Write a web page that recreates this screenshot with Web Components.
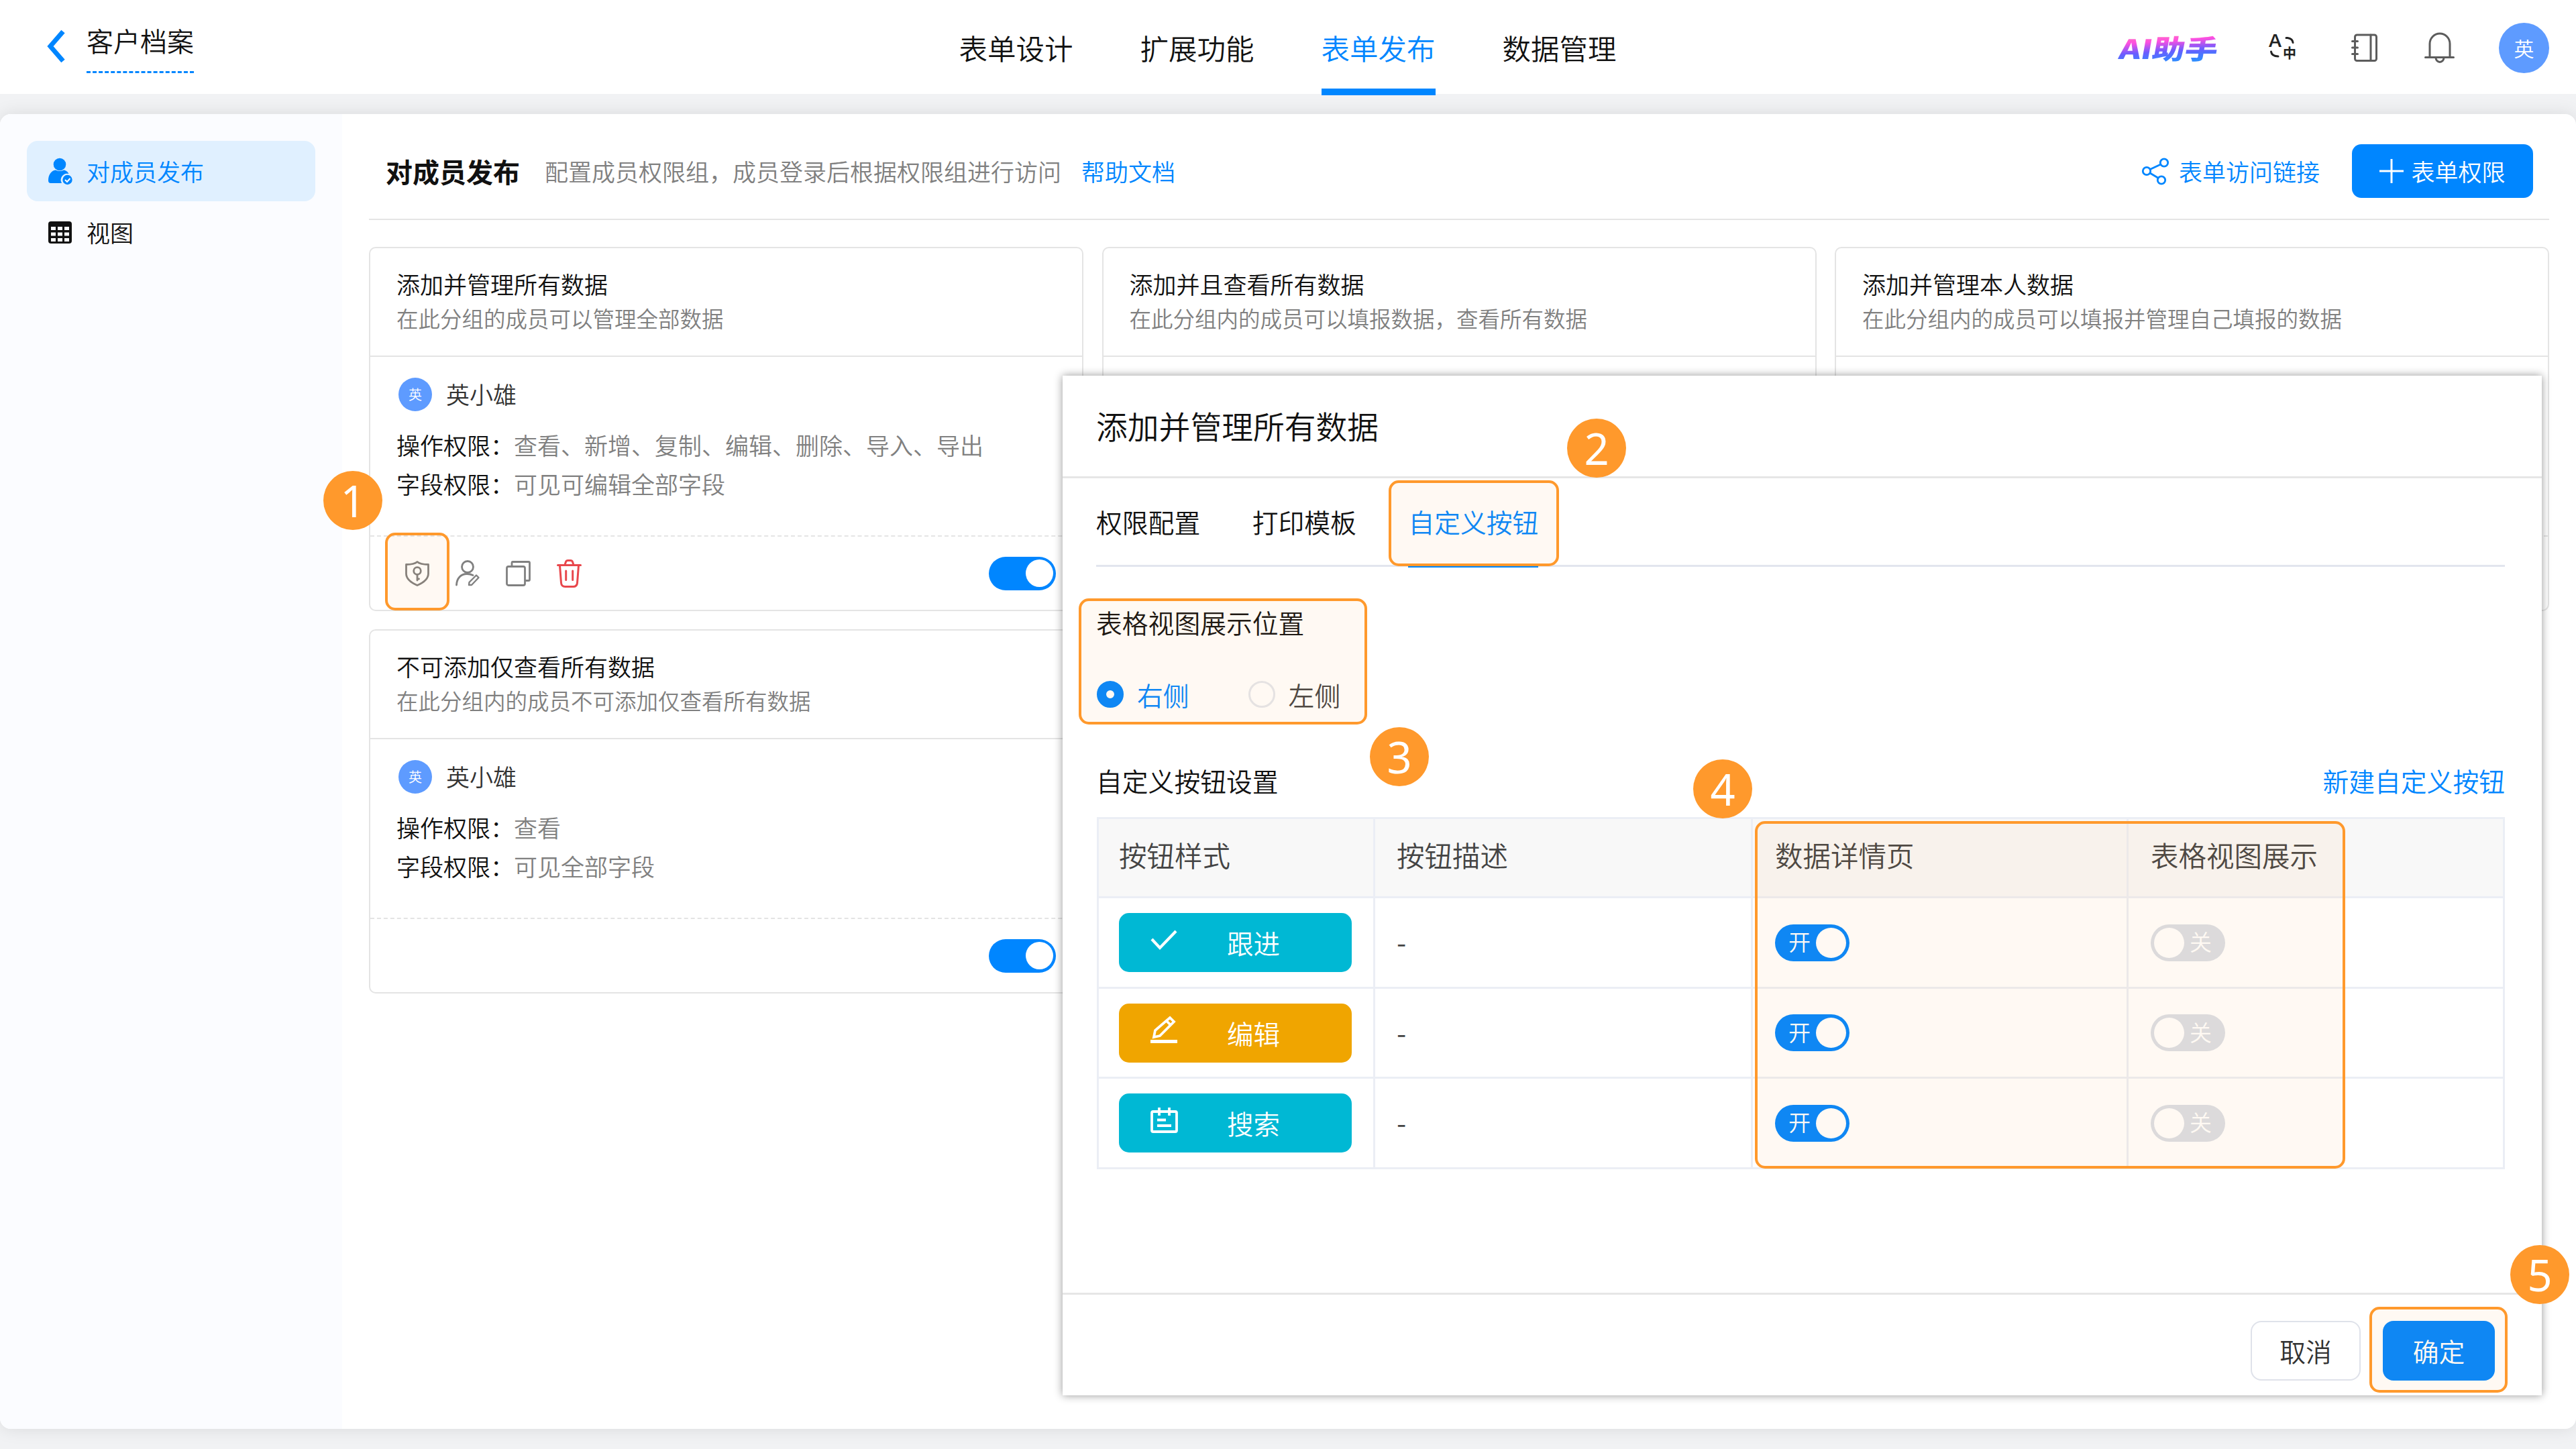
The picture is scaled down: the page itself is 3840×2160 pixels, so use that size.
<!DOCTYPE html>
<html lang="zh-CN">
<head>
<meta charset="utf-8">
<title>客户档案</title>
<style>
    html, body {
        margin: 0;
        width: 3840px;
        height: 2160px;
        overflow: hidden;
    }
    body {
        position: relative;
        background: #f1f2f4;
        color: #111;
        font-family: "Noto Sans CJK SC", "Noto Sans", sans-serif;
        font-size: 35px;
        font-weight: 350;
        line-height: 1.5;
        --primary: #0086ff;
        --line: #e4e4e4;
        --muted: #808080;
        --mark: #ff992c;
    }
</style>
</head>
<body>
<form-header></form-header>
<publish-page></publish-page>
<config-dialog></config-dialog>

<mark-box style="left:574px;top:794px;width:96px;height:116px"></mark-box>
<mark-box style="left:2070px;top:716px;width:254px;height:128px"></mark-box>
<mark-box style="left:1608px;top:892px;width:430px;height:188px"></mark-box>
<mark-box style="left:2616px;top:1224px;width:880px;height:518px"></mark-box>
<mark-box style="left:3532px;top:1948px;width:206px;height:128px"></mark-box>
<mark-badge style="left:482px;top:702px">1</mark-badge>
<mark-badge style="left:2336px;top:624px">2</mark-badge>
<mark-badge style="left:2042px;top:1084px">3</mark-badge>
<mark-badge style="left:2524px;top:1132px">4</mark-badge>
<mark-badge style="left:3742px;top:1856px">5</mark-badge>

<script>
const ICONS = {
    back: [30, 52, '<path d="M27 4 8 26 27 48" fill="none" stroke="currentColor" stroke-width="7"/>'],
    translate: [41, 40, `
        <g fill="currentColor" font-family="Noto Sans CJK SC, sans-serif" font-weight="700">
            <text x="0" y="19" font-size="26" textLength="19" lengthAdjust="spacingAndGlyphs" font-weight="500">A</text>
            <text x="21" y="36" font-size="20">中</text>
        </g>
        <g fill="none" stroke="currentColor" stroke-width="3" stroke-linecap="round">
            <path d="M26 5.500h2q7.500 1 8 7"/>
            <path d="M3.500 26q1 7 10.500 7"/>
        </g>`],
    book: [40, 43, `
        <g fill="none" stroke="currentColor" stroke-width="3" stroke-linecap="round">
            <rect x="5.500" y="2" width="32" height="38.500" rx="3"/>
            <path d="M29 2v38M1.500 11.500h8M1.500 21h8M1.500 30.500h8"/>
        </g>`],
    bell: [45, 46, `
        <g fill="none" stroke="currentColor" stroke-width="3" stroke-linecap="round">
            <path d="M8 37V17.500a15 15.500 0 0 1 30 0V37M1.500 37.500h42"/>
            <path d="M17 38a6 6.500 0 0 0 12 0"/>
        </g>`],
    member: [37, 41, `
        <g fill="currentColor">
            <circle cx="17" cy="10" r="9.300"/>
            <path d="M0 34c0-9 5-15 11-15.500q6 3 12 0c4 .5 6 3 7.500 5.500A9.500 9.500 0 0 0 20 38H3.500Q0 38 0 34z"/>
            <circle cx="28.500" cy="33" r="7.200"/>
        </g>
        <path d="m25 33 3 3 4.500-5" fill="none" stroke="#fff" stroke-width="2"/>`],
    grid: [35, 33, `
        <rect width="35" height="33" rx="4" fill="currentColor"/>
        <path d="M4 8h7v5H4zm10 0h7v5h-7zm10 0h7v5h-7zM4 16.500h7v5H4zm10 0h7v5h-7zm10 0h7v5h-7zM4 25h7v5H4zm10 0h7v5h-7zm10 0h7v5h-7z" fill="#fbfcff"/>`],
    share: [40, 41, `
        <g fill="none" stroke="currentColor" stroke-width="2.800">
            <circle cx="33" cy="7.500" r="5.700"/><circle cx="7" cy="20" r="5.700"/><circle cx="29" cy="33.500" r="5.700"/>
            <path d="M12 17.500 28 10M12 23l12.500 7.500"/>
        </g>`],
    plus: [36, 36, '<path d="M18 0v36M0 18h36" stroke="currentColor" stroke-width="3"/>'],
    shield: [36, 38, `
        <g fill="none" stroke="currentColor" stroke-width="2.800" stroke-linecap="round" stroke-linejoin="round">
            <path d="M18 1.500C14 5 8 5.500 1.500 5.500V19c0 8 6 13 16.500 17.500C28.500 32 34.500 27 34.500 19V5.500C28 5.500 22 5 18 1.500z"/>
            <circle cx="18" cy="15" r="5.300"/><path d="M18 20.500V29M18 27l2.500 0"/>
        </g>`],
    editor: [36, 39, `
        <g fill="none" stroke="currentColor" stroke-width="2.800" stroke-linecap="round">
            <circle cx="18" cy="10" r="8.500"/>
            <path d="M1.500 37C2 27 8 20.500 17 20.500q5 0 9 2"/>
            <path d="M20 37l.5-4L31 22.500l3.500 3.500L24 37z" stroke-width="2.400" stroke-linejoin="round"/>
        </g>`],
    copy: [37, 38, `
        <g fill="none" stroke="currentColor" stroke-width="2.800" stroke-linejoin="round">
            <rect x="1.500" y="8.500" width="27" height="28" rx="2.500"/>
            <path d="M9 8V3q0-1.500 1.500-1.500H34q1.500 0 1.500 1.500v25q0 1.500-1.500 1.500h-5"/>
        </g>`],
    trash: [37, 42, `
        <g fill="none" stroke="#e8474c" stroke-width="3" stroke-linecap="round">
            <path d="M1.500 8.500h34M12 8l1.500-4.500q.7-2 3-2h4q2.300 0 3 2L25 8"/>
            <path d="M4.500 9l2 26q.5 5.500 6 5.500h12q5.500 0 6-5.500l2-26M13.700 17v13.500M23.700 17v13.500"/>
        </g>`],
    check: [40, 30, '<path d="M2 14l12 13L38 2" fill="none" stroke="currentColor" stroke-width="4.200"/>'],
    pencil: [40, 42, `
        <g fill="none" stroke="currentColor" stroke-width="3.800">
            <path d="M5 32l2-10L29 3l6 6-21 21zM24 8l6 6"/><path d="M0 38.500h40" stroke-width="5"/>
        </g>`],
    note: [41, 38, `
        <g fill="none" stroke="currentColor" stroke-width="3.800">
            <rect x="2" y="6" width="37" height="30" rx="2"/>
            <path d="M13 0v12M28 0v12M10 18.500h13M10 27h21"/>
        </g>`]
};

class AppIcon extends HTMLElement {
    connectedCallback() {
        const [w, h, body] = ICONS[this.getAttribute('name')];
        this.attachShadow({ mode: 'open' }).innerHTML = `
            <style>
                :host { display: block; flex: none; width: ${w}px; height: ${h}px; }
                svg { display: block; overflow: visible; }
            </style>
            <svg width="${w}" height="${h}" viewBox="0 0 ${w} ${h}">${body}</svg>`;
    }
}
customElements.define('app-icon', AppIcon);

class UserAvatar extends HTMLElement {
    connectedCallback() {
        this.attachShadow({ mode: 'open' }).innerHTML = `
            <style>
                :host {
                    display: flex;
                    flex: none;
                    align-items: center;
                    justify-content: center;
                    width: 50px;
                    height: 50px;
                    border-radius: 50%;
                    background: #5e9bff;
                    color: #fff;
                    font-size: 20px;
                    line-height: 1;
                }
                :host([large]) { width: 75px; height: 75px; font-size: 30px; }
            </style>
            <slot></slot>`;
    }
}
customElements.define('user-avatar', UserAvatar);

class ToggleSwitch extends HTMLElement {
    connectedCallback() {
        this.attachShadow({ mode: 'open' }).innerHTML = `
            <style>
                :host {
                    box-sizing: border-box;
                    display: flex;
                    flex: none;
                    align-items: center;
                    justify-content: flex-end;
                    width: 100px;
                    height: 50px;
                    padding: 0 4px;
                    border-radius: 28px;
                    background: var(--primary);
                    color: #fff;
                    font-size: 33px;
                    line-height: 50px;
                }
                i { width: 41px; height: 41px; border-radius: 50%; background: #fff; }
                :host([text]) { width: 111px; height: 55px; padding: 0 5px; gap: 8px; }
                :host([text]) i { width: 45px; height: 45px; }
                :host([off]) { flex-direction: row-reverse; background: #dadfe6; }
                span { padding-bottom: 4px; }
            </style>
            ${this.hasAttribute('text') ? `<span>${this.getAttribute('text')}</span>` : ''}<i></i>`;
    }
}
customElements.define('toggle-switch', ToggleSwitch);

class FormHeader extends HTMLElement {
    connectedCallback() {
        this.attachShadow({ mode: 'open' }).innerHTML = `
            <style>
                :host {
                    box-sizing: border-box;
                    display: grid;
                    grid-template-columns: 1fr auto 1fr;
                    height: 140px;
                    padding: 0 40px 0 67px;
                    background: #fff;
                }
                .left { display: flex; align-items: flex-start; gap: 32px; padding-top: 43px; }
                .left app-icon { color: var(--primary); }
                .name {
                    width: 160px;
                    height: 64px;
                    margin-top: -1px;
                    font-size: 40px;
                    line-height: 36px;
                    border-bottom: 3px dashed var(--primary);
                }
                nav { display: flex; gap: 100px; margin-left: -28px; }
                nav a {
                    width: 170px;
                    height: 132px;
                    font-size: 42.500px;
                    line-height: 142px;
                    white-space: nowrap;
                }
                nav a.active { color: var(--primary); border-bottom: 10px solid var(--primary); }
                .right { display: flex; align-items: center; justify-content: flex-end; color: #5c5c5c; }
                .ai {
                    width: 146px;
                    margin-right: 76px;
                }
                .ai span {
                    display: inline-block;
                    font-size: 40px;
                    font-weight: 900;
                    line-height: 56px;
                    white-space: nowrap;
                    transform-origin: 0 50%;
                    transform: skewX(-10deg) scaleX(1.220);
                    background: linear-gradient(175deg, #ff6cc8 22%, #ff4fe0 34%, #6a5cff 58%, #2f8cff 82%);
                    -webkit-background-clip: text;
                    color: transparent;
                }
            </style>
            <div class="left"><app-icon name="back"></app-icon><div class="name">客户档案</div></div>
            <nav><a>表单设计</a><a>扩展功能</a><a class="active">表单发布</a><a>数据管理</a></nav>
            <div class="right">
                <div class="ai"><span>AI助手</span></div>
                <app-icon name="translate" style="color:#222;margin-right:82px"></app-icon>
                <app-icon name="book" style="margin-right:69px"></app-icon>
                <app-icon name="bell" style="margin-right:66px"></app-icon>
                <user-avatar large>英</user-avatar>
            </div>`;
    }
}
customElements.define('form-header', FormHeader);

class NavItem extends HTMLElement {
    connectedCallback() {
        this.attachShadow({ mode: 'open' }).innerHTML = `
            <style>
                :host {
                    display: flex;
                    align-items: center;
                    gap: 22px;
                    height: 90px;
                    padding-left: 32px;
                    border-radius: 16px;
                }
                :host([active]) { gap: 20px; background: #e0f0ff; color: var(--primary); }
            </style>
            <app-icon name="${this.getAttribute('icon')}"></app-icon><slot></slot>`;
    }
}
customElements.define('nav-item', NavItem);

class PermCard extends HTMLElement {
    connectedCallback() {
        const attr = (name) => this.getAttribute(name) || '';
        this.attachShadow({ mode: 'open' }).innerHTML = `
            <style>
                :host {
                    box-sizing: border-box;
                    display: flex;
                    flex-direction: column;
                    height: 543px;
                    border: 2px solid var(--line);
                    border-radius: 10px;
                    background: #fff;
                }
                .head {
                    box-sizing: border-box;
                    height: 162px;
                    padding: 27px 39px 0;
                    border-bottom: 2px solid var(--line);
                    line-height: 51px;
                }
                .head p { margin: 0; color: var(--muted); font-size: 32.500px; }
                .body { flex: 1; padding: 31px 39px 0; line-height: 58px; }
                .user { display: flex; align-items: center; gap: 21px; height: 50px; padding-left: 3px; margin-bottom: 21px; line-height: 1; }
                .user span { padding-bottom: 3px; color: #333; }
                .body b { font-weight: inherit; }
                .body div + div span { color: var(--muted); }
                .foot {
                    display: flex;
                    align-items: center;
                    height: 109px;
                    padding: 0 39px 0 52px;
                    gap: 39px;
                    color: #808080;
                    border-top: 2px dashed var(--line);
                }
                toggle-switch { margin-left: auto; }
            </style>
            <div class="head">${attr('name')}<p>${attr('note')}</p></div>
            <div class="body">
                ${attr('user') && `
                <div class="user"><user-avatar>英</user-avatar><span>${attr('user')}</span></div>
                <div><b>操作权限：</b><span>${attr('ops')}</span></div>
                <div><b>字段权限：</b><span>${attr('fields')}</span></div>`}
            </div>
            <div class="foot"><slot></slot><toggle-switch></toggle-switch></div>`;
    }
}
customElements.define('perm-card', PermCard);

class PublishPage extends HTMLElement {
    connectedCallback() {
        this.attachShadow({ mode: 'open' }).innerHTML = `
            <style>
                :host {
                    display: flex;
                    height: 1960px;
                    margin-top: 30px;
                    border-radius: 16px;
                    background: #fff;
                    box-shadow: 0 0 26px rgba(0, 0, 0, .1);
                    overflow: hidden;
                }
                aside {
                    box-sizing: border-box;
                    flex: none;
                    display: flex;
                    flex-direction: column;
                    gap: 1px;
                    width: 510px;
                    padding: 40px;
                    background: #fbfcff;
                }
                main { flex: 1; padding: 0 40px; }
                .head {
                    box-sizing: border-box;
                    display: flex;
                    align-items: center;
                    height: 158px;
                    padding: 14px 24px 0;
                    border-bottom: 2px solid var(--line);
                }
                h1 { margin: 0 37px 0 1px; font-size: 40px; font-weight: 700; }
                .desc { color: var(--muted); }
                a { color: var(--primary); margin-left: 30px; }
                .link { display: flex; align-items: center; gap: 15px; margin-left: auto; }
                button {
                    display: flex;
                    align-items: center;
                    justify-content: center;
                    gap: 11px;
                    width: 270px;
                    height: 80px;
                    margin-left: 48px;
                    padding: 0;
                    border: 0;
                    border-radius: 14px;
                    background: var(--primary);
                    color: #fff;
                    font: inherit;
                }
                .cards {
                    display: grid;
                    grid-template-columns: repeat(3, 1fr);
                    gap: 27px 27.500px;
                    margin-top: 40px;
                }
            </style>
            <aside>
                <nav-item icon="member" active>对成员发布</nav-item>
                <nav-item icon="grid">视图</nav-item>
            </aside>
            <main>
                <div class="head">
                    <h1>对成员发布</h1>
                    <span class="desc">配置成员权限组，成员登录后根据权限组进行访问</span>
                    <a>帮助文档</a>
                    <a class="link"><app-icon name="share"></app-icon>表单访问链接</a>
                    <button><app-icon name="plus"></app-icon>表单权限</button>
                </div>
                <div class="cards">
                    <perm-card name="添加并管理所有数据" note="在此分组的成员可以管理全部数据" user="英小雄"
                        ops="查看、新增、复制、编辑、删除、导入、导出" fields="可见可编辑全部字段">
                        <app-icon name="shield"></app-icon>
                        <app-icon name="editor"></app-icon>
                        <app-icon name="copy"></app-icon>
                        <app-icon name="trash"></app-icon>
                    </perm-card>
                    <perm-card name="添加并且查看所有数据" note="在此分组内的成员可以填报数据，查看所有数据"></perm-card>
                    <perm-card name="添加并管理本人数据" note="在此分组内的成员可以填报并管理自己填报的数据"></perm-card>
                    <perm-card name="不可添加仅查看所有数据" note="在此分组内的成员不可添加仅查看所有数据" user="英小雄"
                        ops="查看" fields="可见全部字段"></perm-card>
                </div>
            </main>`;
    }
}
customElements.define('publish-page', PublishPage);

class StyleButton extends HTMLElement {
    connectedCallback() {
        this.attachShadow({ mode: 'open' }).innerHTML = `
            <style>
                :host {
                    box-sizing: border-box;
                    display: flex;
                    align-items: center;
                    width: 347px;
                    height: 88px;
                    padding-left: 47px;
                    border-radius: 15px;
                    color: #fff;
                    font-size: 39.500px;
                }
                .icon { flex: none; width: 114px; padding-bottom: 9px; }
            </style>
            <div class="icon"><app-icon name="${this.getAttribute('icon')}"></app-icon></div><slot></slot>`;
        this.style.background = this.getAttribute('color');
    }
}
customElements.define('style-button', StyleButton);

class ConfigDialog extends HTMLElement {
    connectedCallback() {
        const rows = [
            ['check', '#00b8d4', '跟进'],
            ['pencil', '#f0a500', '编辑'],
            ['note', '#00b8d4', '搜索']
        ];
        this.attachShadow({ mode: 'open' }).innerHTML = `
            <style>
                :host {
                    position: absolute;
                    left: 1584px;
                    top: 560px;
                    display: flex;
                    flex-direction: column;
                    width: 2205px;
                    height: 1520px;
                    background: #fff;
                    box-shadow: 0 0 12px rgba(0, 0, 0, .42);
                    font-size: 38.800px;
                    line-height: 54px;
                }
                header {
                    height: 150px;
                    padding-left: 50px;
                    border-bottom: 3px solid #e6e6e6;
                    font-size: 46.800px;
                    line-height: 147px;
                }
                main { flex: 1; padding: 0 55px 0 51px; }
                .tabs { display: flex; gap: 77.500px; height: 129px; margin-left: -1px; border-bottom: 3px solid #e2e5ee; line-height: 129px; }
                .tabs .active { height: 129px; color: var(--primary); border-bottom: 4px solid var(--primary); }
                .label { margin: 55px 0 0 -1px; }
                .radios { display: flex; margin-top: 54px; gap: 88px; color: #444; }
                .radios label { display: flex; align-items: center; gap: 20px; }
                .radios i {
                    box-sizing: border-box;
                    width: 40px;
                    height: 40px;
                    border: 3px solid #e4e7ed;
                    border-radius: 50%;
                }
                .radios .on { color: var(--primary); }
                .radios .on i { border: 14px solid var(--primary); }
                .section { display: flex; justify-content: space-between; margin: 74px 0 0 -1px; }
                .section a { color: var(--primary); }
                .table {
                    display: grid;
                    grid-template-columns: 412px 563px 560px 561px;
                    grid-template-rows: 118px 135px 134px 135px;
                    margin-top: 28px;
                    border: 3px solid #ebeef5;
                    border-width: 3px 0 0 3px;
                    font-size: 41.500px;
                    color: #444;
                }
                .table > div {
                    box-sizing: border-box;
                    display: flex;
                    align-items: center;
                    padding-left: 33px;
                    border: 3px solid #ebeef5;
                    border-width: 0 3px 3px 0;
                }
                .table > .th { background: #f8f8f8; padding-bottom: 10px; }
                .table > div:nth-child(4n + 1) { padding-left: 30px; }
                .table > div:nth-child(4n + 2) { padding-left: 32px; }
                .table > .dash { padding-bottom: 4px; }
                footer {
                    display: flex;
                    justify-content: flex-end;
                    gap: 33px;
                    height: 111px;
                    padding: 39px 70px 0 0;
                    border-top: 3px solid #e6e6e6;
                }
                button {
                    box-sizing: border-box;
                    width: 164px;
                    height: 89px;
                    padding: 0 0 2px;
                    border: 2px solid #dfe2ea;
                    border-radius: 16px;
                    background: #fff;
                    color: #333;
                    font: inherit;
                }
                button.ok { width: 167px; border: 0; background: var(--primary); color: #fff; }
            </style>
            <header>添加并管理所有数据</header>
            <main>
                <div class="tabs"><span>权限配置</span><span>打印模板</span><span class="active">自定义按钮</span></div>
                <div class="label">表格视图展示位置</div>
                <div class="radios"><label class="on"><i></i>右侧</label><label><i></i>左侧</label></div>
                <div class="section"><span>自定义按钮设置</span><a>新建自定义按钮</a></div>
                <div class="table">
                    <div class="th">按钮样式</div><div class="th">按钮描述</div>
                    <div class="th">数据详情页</div><div class="th">表格视图展示</div>
                    ${rows.map(([icon, color, text]) => `
                    <div><style-button icon="${icon}" color="${color}">${text}</style-button></div>
                    <div class="dash">-</div>
                    <div><toggle-switch text="开"></toggle-switch></div>
                    <div><toggle-switch text="关" off></toggle-switch></div>`).join('')}
                </div>
            </main>
            <footer><button>取消</button><button class="ok">确定</button></footer>`;
    }
}
customElements.define('config-dialog', ConfigDialog);

class MarkBox extends HTMLElement {
    connectedCallback() {
        this.attachShadow({ mode: 'open' }).innerHTML = `
            <style>
                :host {
                    position: absolute;
                    box-sizing: border-box;
                    border: 4px solid var(--mark);
                    border-radius: 15px;
                    background: rgba(255, 153, 44, .06);
                }
            </style>`;
    }
}
customElements.define('mark-box', MarkBox);

class MarkBadge extends HTMLElement {
    connectedCallback() {
        this.attachShadow({ mode: 'open' }).innerHTML = `
            <style>
                :host {
                    position: absolute;
                    width: 88px;
                    height: 88px;
                    border-radius: 50%;
                    background: var(--mark);
                    color: #fff;
                    font: 65px/88px "Noto Sans", sans-serif;
                    text-align: center;
                }
            </style>
            <slot></slot>`;
    }
}
customElements.define('mark-badge', MarkBadge);
</script>
</body>
</html>
